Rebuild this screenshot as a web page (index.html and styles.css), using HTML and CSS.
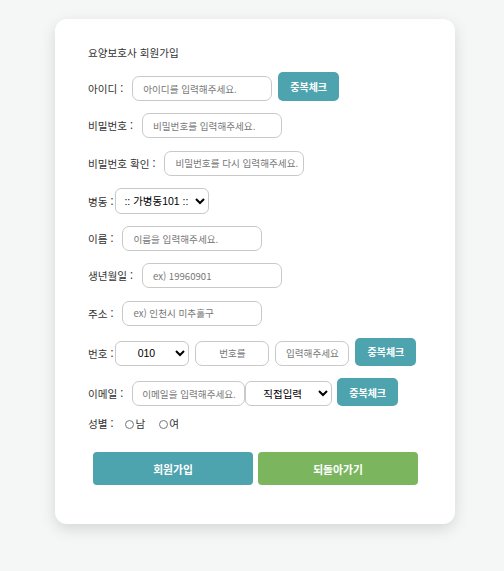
FILE: index.html
```html
<!DOCTYPE html>
<html lang="ko">
<head>
<meta charset="utf-8">
<title>요양보호사 회원가입</title>
<link rel="stylesheet" href="styles.css">
</head>
<body>
<div class="card">
  <form class="form">
    <div class="title">요양보호사 회원가입</div>
    <div class="row row-tall">
      <label class="label">아이디 :</label>
      <input class="field" type="text" placeholder="아이디를 입력해주세요.">
      <button type="button" class="btn-check btn-tall">중복체크</button>
    </div>
    <div class="row">
      <label class="label">비밀번호 :</label>
      <input class="field" type="password" placeholder="비밀번호를 입력해주세요.">
    </div>
    <div class="row">
      <label class="label">비밀번호 확인 :</label>
      <input class="field" type="password" placeholder="비밀번호를 다시 입력해주세요.">
    </div>
    <div class="row">
      <label class="label label-sel">병동 :</label>
      <select class="sel sel-ward">
        <option>:: 가병동101 ::</option>
      </select>
    </div>
    <div class="row">
      <label class="label">이름 :</label>
      <input class="field" type="text" placeholder="이름을 입력해주세요.">
    </div>
    <div class="row">
      <label class="label">생년월일 :</label>
      <input class="field" type="text" placeholder="ex) 19960901">
    </div>
    <div class="row">
      <label class="label">주소 :</label>
      <input class="field" type="text" placeholder="ex) 인천시 미추홀구">
    </div>
    <div class="row">
      <label class="label label-sel">번호 :</label>
      <select class="sel sel-phone">
        <option>010</option>
      </select>
      <input class="field field-short" type="text" placeholder="번호를">
      <input class="field field-short" type="text" placeholder="입력해주세요">
      <button type="button" class="btn-check">중복체크</button>
    </div>
    <div class="row">
      <label class="label">이메일 :</label>
      <input class="field field-mail" type="text" placeholder="이메일을 입력해주세요.">
      <select class="sel sel-mail">
        <option>직접입력</option>
      </select>
      <button type="button" class="btn-check btn-mail">중복체크</button>
    </div>
    <div class="row row-gender">
      <span class="label label-gender">성별 :</span>
      <label class="radio"><input type="radio" name="gender">남</label>
      <label class="radio"><input type="radio" name="gender">여</label>
    </div>
    <div class="actions">
      <button type="button" class="btn-big btn-join">회원가입</button>
      <button type="button" class="btn-big btn-back">되돌아가기</button>
    </div>
  </form>
</div>
</body>
</html>
```

FILE: styles.css
```css
html, body {
  margin: 0;
  padding: 0;
}
body {
  background: #f5f7f6;
  font-family: "Noto Sans CJK KR", "Noto Sans", sans-serif;
  color: #333;
  width: 504px;
  height: 571px;
}
.card {
  box-sizing: border-box;
  width: 400px;
  margin: 19px 0 0 55px;
  background: #fff;
  border-radius: 12px;
  box-shadow: 0 5px 15px rgba(0, 0, 0, 0.13);
  padding: 26px 33px 39px;
}
.form {
  display: flex;
  flex-direction: column;
  gap: 12.25px;
}
.title {
  font-size: 10.6px;
  line-height: 16px;
  height: 16px;
  margin-bottom: -1.25px;
}
.row {
  display: flex;
  align-items: flex-end;
}
.label {
  font-size: 10.6px;
  line-height: 25px;
  margin-right: 9px;
  white-space: nowrap;
}
.label-sel {
  margin-right: 2px;
}
.field {
  box-sizing: border-box;
  width: 140px;
  height: 25px;
  border: 1px solid #c9c9c9;
  border-radius: 7px;
  padding: 0 4px 0 10px;
  font-family: inherit;
  font-size: 9.6px;
  color: #333;
  background: #fff;
  outline: none;
}
.field::placeholder {
  color: #777;
}
.field-short {
  width: 74px;
  margin-left: 6px;
  text-align: center;
  padding: 0 3px;
}
.field-mail {
  width: 113px;
  padding-left: 9px;
}
.sel {
  box-sizing: border-box;
  height: 25px;
  border: 1px solid #c9c9c9;
  border-radius: 6px;
  background: #fff;
  font-family: "Liberation Sans", "Noto Sans CJK KR", sans-serif;
  font-size: 10.5px;
  color: #000;
  text-align: center;
  text-align-last: center;
  padding: 0 4px;
}
.sel-ward {
  width: 94px;
  height: 26px;
}
.sel-phone {
  width: 74px;
}
.sel-mail {
  width: 87px;
  font-family: "Noto Sans CJK KR", sans-serif;
}
.btn-check {
  box-sizing: border-box;
  width: 61px;
  height: 28px;
  margin-left: 6px;
  border: none;
  border-radius: 5px;
  background: #4da3ae;
  color: #fff;
  font-family: "Noto Sans CJK KR", sans-serif;
  font-size: 10px;
  font-weight: 700;
  padding: 0;
}
.btn-tall {
  height: 29px;
}
.btn-mail {
  margin-left: 5px;
}
.row-gender {
  align-items: center;
  height: 16px;
  margin-top: -2px;
}
.label-gender {
  line-height: 16px;
  margin-right: 12px;
}
.radio {
  display: flex;
  align-items: center;
  font-size: 10.6px;
  line-height: 16px;
  margin-right: 14px;
}
.radio input {
  appearance: none;
  -webkit-appearance: none;
  box-sizing: border-box;
  width: 9px;
  height: 9px;
  margin: 0 1px 0 0;
  border: 1px solid #777;
  border-radius: 50%;
  background: #fff;
}
.actions {
  display: flex;
  gap: 5px;
  padding-left: 5px;
  margin-top: 7.75px;
}
.btn-big {
  width: 160px;
  height: 33px;
  border: none;
  border-radius: 4px;
  color: #fff;
  font-family: "Noto Sans CJK KR", sans-serif;
  font-size: 10.8px;
  font-weight: 700;
  padding: 0;
}
.btn-join {
  background: #4da3ae;
}
.btn-back {
  background: #7bb65f;
}
```
